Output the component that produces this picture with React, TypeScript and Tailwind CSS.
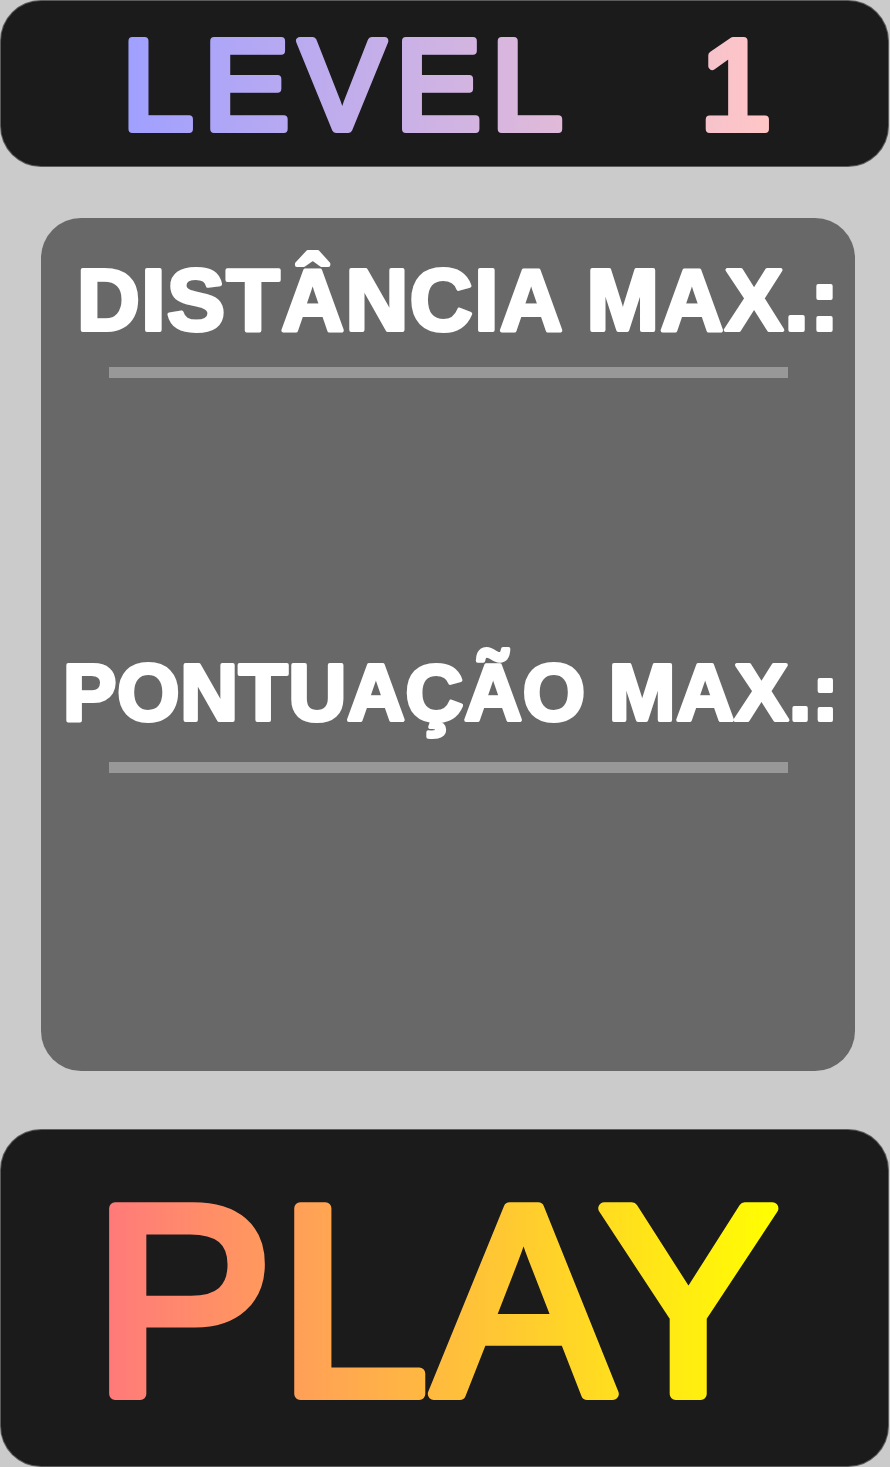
const titleFont = "'Liberation Sans', Arial, sans-serif"

export default function App() {
  return (
    <div className="w-[890px] h-[1467px] bg-[#cbcbcb] flex flex-col font-['Liberation_Sans',Arial,sans-serif]">
      {/* level banner */}
      <div className="mt-px ml-px mr-[2px] h-[165px] rounded-[40px] bg-[#1b1b1b] ring-1 ring-[#5c5c5c] overflow-hidden">
        <svg width="887" height="165" className="block">
          <defs>
            <linearGradient id="lvl" gradientUnits="userSpaceOnUse" x1="126" y1="0" x2="764" y2="0">
              <stop offset="0" stopColor="#a0a0ff" />
              <stop offset="1" stopColor="#ffc6c6" />
            </linearGradient>
          </defs>
          <g fill="url(#lvl)" stroke="url(#lvl)" strokeWidth="8" strokeLinejoin="round" fontFamily={titleFont} fontSize="128">
            <text x="121" y="128" letterSpacing="10.5">LEVEL</text>
            <text x="699" y="128">1</text>
          </g>
        </svg>
      </div>

      {/* records panel */}
      <div className="mt-[52px] ml-[41px] mr-[35px] h-[853px] rounded-[40px] bg-[#686868] flex flex-col pt-[30px]">
        <svg width="814" height="104" className="block">
          <text x="36" y="82" fill="white" stroke="white" strokeWidth="4" strokeLinejoin="round" fontFamily={titleFont} fontWeight="700" fontSize="87" letterSpacing="1.5">
            DISTÂNCIA MAX.:
          </text>
        </svg>
        <div className="mt-[15px] ml-[68px] mr-[67px] h-[11px] bg-[#989898]" />
        <svg width="814" height="100" className="block mt-[262px]">
          <text x="22" y="80" fill="white" stroke="white" strokeWidth="4" strokeLinejoin="round" fontFamily={titleFont} fontWeight="700" fontSize="80" letterSpacing="0.8">
            PONTUAÇÃO MAX.:
          </text>
        </svg>
        <div className="mt-[22px] ml-[68px] mr-[67px] h-[11px] bg-[#989898]" />
      </div>

      {/* play button */}
      <div className="mt-[59px] ml-px mr-[2px] h-[336px] rounded-[40px] bg-[#1b1b1b] ring-1 ring-[#5c5c5c] overflow-hidden">
        <svg width="887" height="336" className="block">
          <defs>
            <linearGradient id="play" gradientUnits="userSpaceOnUse" x1="107" y1="0" x2="780" y2="0">
              <stop offset="0" stopColor="#ff7a7a" />
              <stop offset="1" stopColor="#ffff00" />
            </linearGradient>
          </defs>
          <text x="92" y="264" fill="url(#play)" stroke="url(#play)" strokeWidth="12" strokeLinejoin="round" fontFamily={titleFont} fontSize="270" letterSpacing="5">
            PLAY
          </text>
        </svg>
      </div>
    </div>
  )
}
